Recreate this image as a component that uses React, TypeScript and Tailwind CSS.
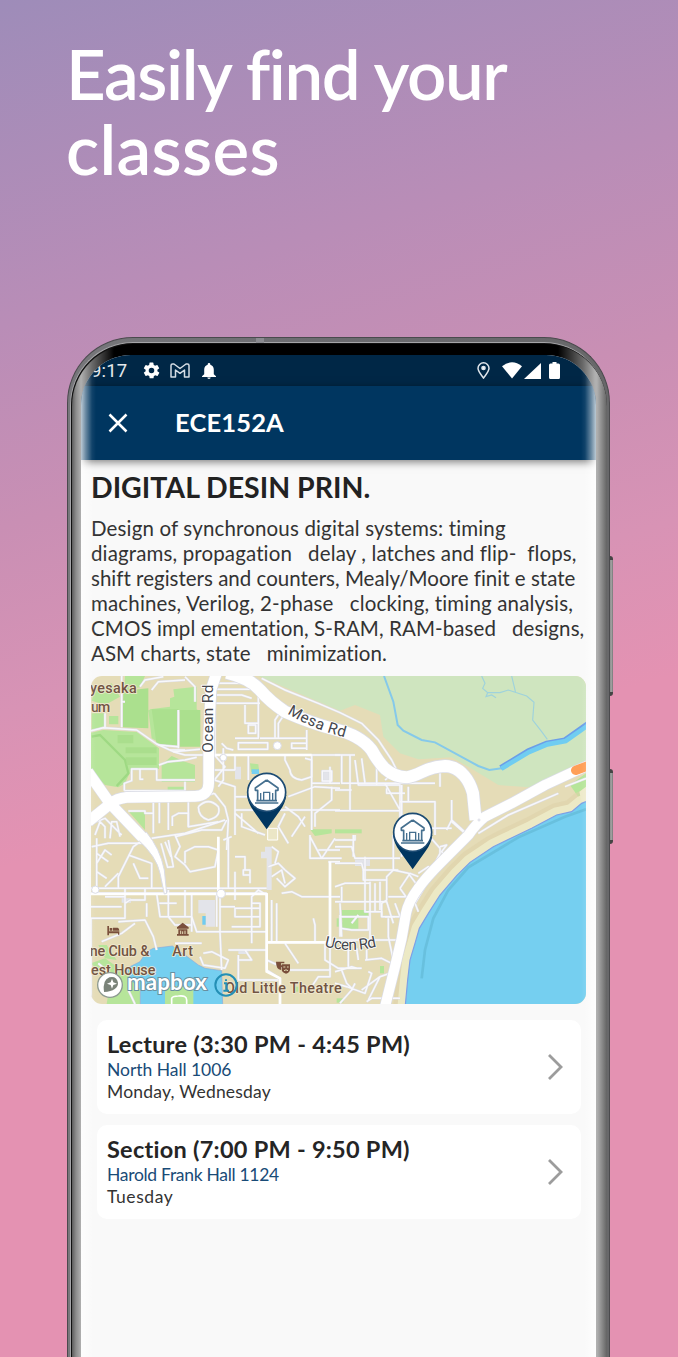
const minorRoads = [
  "M110 18V172", "M18 182L55 173L155 180L215 222L265 245L345 238", "M165 50L180 30L235 20M300 20L330 50V95", "M60 130V172",
  "M265 245L300 255H765", "M222 285L250 275L300 270L335 262", "M118 362V340L140 332V297H215V330H330", "M118 362H300V335", "M165 297V328H175",
  "M205 395V490M223 395V460M250 395V480M205 430H180V423H130M262 468V440L280 430H310V470", "M310 395V470L400 455", "M20 460L60 445L110 495M30 495L45 455L60 470V505M75 505L80 455L95 455L105 500",
  "M390 18V255M390 40H520M390 58H500M395 75H470L500 85M390 100H525M500 18L520 40", "M480 105V160H520V105M520 75V205H450M490 165H512V190H490Z M460 218H548V238H460Z",
  "M570 205V150L590 120M580 205V160L600 130M525 205H665M665 180V240M620 220H665V235H620Z", "M388 255L420 290L388 330M415 235V330L400 350M410 220L425 235L445 240M388 330L450 350V495M388 300H450V255",
  "M490 255V330M450 420H765M520 330L500 380H450M600 255V270L615 300Q615 325 650 330L680 320L680 270L660 265", "M680 255V480M680 340H765M735 290V340M712 303H740V333H712Z",
  "M610 380L690 350L765 355M600 410L640 440L660 470M690 470L690 430L740 390V350", "M450 430L520 490M470 430V470L540 495M600 430L580 470L610 520M620 500L660 440",
  "M388 370L420 410L430 450L425 540M340 385L388 370M340 410Q370 380 400 410Q410 440 370 450Q340 440 340 410", "M200 505L300 490L420 450M425 450L410 480H350L270 500",
  "M270 495L285 530L270 560L300 585L315 605L390 590L400 540L370 530L330 530L300 545V580", "M400 505V660M415 510L440 500M430 505V655M450 560H480V600H495V640M475 600H495V615H475Z",
  "M18 655H545M18 670H545M405 672V785H545M395 672V770M545 670V900L585 925V1002", "M545 675L520 660L500 680V820M450 605V690M450 715H525V740H450ZM500 700H525V770H440M405 710H450",
  "M100 655V620L130 560L145 530L180 505M130 555L200 580V655M145 580L165 625H190M60 650L100 610", "M35 505V650M35 550L70 575M35 605L65 625M35 580L60 540L80 555M20 530L70 520H180",
  "M18 745H120V655M18 710H110M60 680H120V700L135 690H180V655M215 670L225 740H320M223 700H275M250 660V740L270 765H320M320 670V785",
  "M100 755L180 750L205 800L215 840M50 815L110 790L150 760M185 700V740M320 740L335 785H405M300 740V660",
  "M18 745V1002M40 880L80 915M130 960L150 1002M405 785L410 900", "M270 820H350M355 850L380 845L430 870L420 895L355 885L345 860", "M460 855V930H580M460 870H500L480 840M430 840H545",
  "M545 817H735V900M735 575V820M730 575H765M560 690V817M575 700V817M590 670L620 665L650 680H765M685 745L690 765V815", "M600 820L640 880M545 870L610 900H735",
  "M600 600L630 625L600 650L575 625M560 620L590 600L600 640", "M675 495V565H770M675 500L710 565L750 505M700 540H765", "M720 820V870L760 895H830M735 895V920H700L680 950L735 960",
  "M750 255H810M770 255V340H1050M795 255V420M810 270L820 345H945V495M750 422H945M900 340L945 420M830 265L840 340M750 360H800",
  "M875 290V345M950 345V560M970 350V395H1050V495M945 475H1100M945 395H1050M905 355V370H960M940 300L900 330", "M1100 390V450L1150 495M1100 450L1085 480M1100 455L1140 490M1065 310V350",
  "M1420 370L1270 435L1180 490M1503 325L1440 350", "M750 510H810V495M805 495V560M750 530L800 530L810 565H945M750 580H830L835 600H940M840 560V725H890V740H930",
  "M925 495V600L970 610L1000 650M925 600L905 620V690L890 700V740M945 655L975 610L1000 620M945 655L970 690", "M850 630H905M855 635V830M870 640V725M885 635V720M835 600V630H850M750 650L780 640H855M770 650V695M750 695H905L925 760",
  "M910 680H960M900 740H945L930 700M765 700L770 800M910 745V800L925 870M750 810H940M765 735V800", "M765 740H850V780H800L765 775M820 735L800 760", "M750 905L800 890L815 895M770 900L785 940L805 960M750 940L785 950L840 970L860 910L850 905M830 960L885 920L915 910M885 920L850 990M840 870L890 865L920 880M790 840V890M815 835L820 870M845 840V870",
  "M1030 495L1065 535V550L1050 580M1065 530L1085 525L1070 545L1080 560L1060 570", "M1000 610L1030 590L1050 600L1020 650L990 700L1000 725", "M765 1000L800 960L810 940M845 995L860 985H945", "M550 590L580 580L600 600M560 530L580 545L570 580",
  "M530 25L600 60L700 100L765 128L830 160L880 210L920 270L935 300", "M200 60L220 35L300 30M110 95H120M255 240H300M280 235V120M220 225L280 230",
  "M250 510L265 590L248 592L228 520M240 515L258 560",
];

const greens = [
  "M120 18H180L165 52L118 62Z", "M30 60L80 40L105 80L60 105L20 92Z", "M20 130H60V168L20 182Z", "M72 138H100V163H72Z", "M265 58L335 50V118L345 125H190L195 118L255 110V85L268 80Z",
  "M18 188L55 180L155 186L222 235V297H140L120 340L100 352L60 345L18 305Z", "M190 120H240V228L200 205Z", "M230 285L260 258L300 275L330 285V335H230Z", "M248 350H300V362H248Z", "M130 423H180V480Z",
  "M495 280L520 283L523 310L498 305Z", "M675 478H740V490L690 498Z", "M750 478H830V490H750Z", "M1455 345L1503 310V395H1490Z", "M770 720H850V738H820V780H765L772 755Z", "M885 888H897V910H885Z", "M755 985H775V998H755Z",
  "M40 825L65 825L95 870L60 865Z", "M18 880L60 865L130 915L165 960V1002H65L75 940Z", "M1020 440L1035 455H1020Z", "M630 950H640V965H630Z", "M755 745V770H765V745Z",
];

function Pin({ x, y }: { x: number; y: number }) {
  return (
    <g transform={`translate(${x} ${y})`}>
      <path d="M-59 8Q-56 34 -39 56L0 111L39 56Q56 34 59 8Z" fill="#003660" />
      <circle r="57" fill="#fff" stroke="#1c4b73" strokeWidth="5" />
      <path d="M0 -37L-34 -13V-6H-27V24M0 -37L34 -13V-6H27V24" fill="none" stroke="#46708f" strokeWidth="5" strokeLinejoin="round" />
      <path d="M-9 24V0H9V24M-18 2V24M18 2V24" fill="none" stroke="#46708f" strokeWidth="4" />
      <path d="M-31 25H31M-35 32H35" stroke="#46708f" strokeWidth="5" />
    </g>
  );
}

function CampusMap() {
  const coast = "M1503 395L1490 400L1460 425L1415 435L1340 475L1262 512L1225 530L1155 577L1115 617L1065 675L1030 730L1003 775L990 820L975 870L968 930L961 1005";
  const mesa = "M425 8Q495 25 525 60T600 125Q680 160 750 178Q825 195 860 240C885 285 910 320 965 322C1010 315 1020 290 1080 288C1130 290 1155 335 1164 370L1172 450";
  const shore = "M1510 286L1460 308L1380 345L1280 400L1200 440Q1175 460 1150 495L1070 575Q1020 625 1000 655Q970 695 963 730L950 805L930 890L900 1010";
  const ocean = "M395 8L378 60L371 200V340Q371 378 330 379L125 382Q95 385 75 402L10 455";
  const diag = "M8 305L75 400L172 502";
  const taper = "M158 508Q215 560 225 610L238 672L245 670L238 600Q225 535 184 486Z";
  const text = { fontFamily: "Roboto, sans-serif", paintOrder: "stroke", stroke: "#f1ead2", strokeWidth: 5, strokeLinejoin: "round" } as const;
  return (
    <svg viewBox="18 18 1485 984" className="block h-[328px] w-[495px] rounded-[11px]" preserveAspectRatio="none">
      <rect x="0" y="0" width="1520" height="1020" fill="#e5dcb7" />
      <path d="M520 18L765 122L810 105L885 135L895 200L945 250L1000 268L1100 262L1150 290L1240 345L1330 352L1400 330L1503 275V18Z" fill="#cfe5bf" />
      {greens.map((d) => <path key={d} d={d} fill="#b6e59a" />)}
      <path d="M115 62L190 55V175L113 172ZM200 118H280V228L215 226ZM284 120H346V230H284Z" fill="#abe08e" />
      <path d="M20 200L45 195L120 270L130 310L95 348" fill="none" stroke="#9ed983" strokeWidth="7" />
      <path d="M98 195H145V220H98ZM122 232H215V250H122ZM122 262H215V285H122Z" fill="#a5dc88" opacity=".7" />
      <path d="M500 298H522V312H500Z" fill="#75cff0" />
      <path d="M450 290H468V328H450ZM340 690H390V770H362V730H340ZM540 530H560V660H545V565H528V545H540ZM712 303H740V333H712ZM460 838H490V852H460ZM110 685H138V698H110ZM810 568H855V588H810Z" fill="#e3e4ea" />
      <path d="M352 738H362V764H352Z" fill="#6fcbf0" />
      <path d="M125 895L165 875L185 845L205 835L262 828L300 855L340 885L360 895L410 902L413 1005H166V960L135 925Z" fill="#75cff0" stroke="#8dabdd" strokeWidth="2" />
      <path d="M240 1005V965Q245 948 280 948Q325 945 325 960V1005Z" fill="#b6e59a" />
      <path d="M260 1005V985Q262 978 280 978Q305 975 305 990V1005" fill="none" stroke="#fff" strokeWidth="5" />
      <path d="M897 18L925 95L938 165L955 182L1010 210L1050 217L1180 288L1213 300L1250 295" fill="none" stroke="#85c9ea" strokeWidth="6" />
      <path d="M1190 18L1200 40L1193 55L1208 68L1245 68L1270 60L1325 78L1347 97L1343 150L1370 185L1387 208M1280 18L1292 68M1208 68L1203 80L1220 75L1233 83" fill="none" stroke="#9fd2dc" strokeWidth="3.5" />
      <path d="M1247 293L1330 243L1385 220L1440 210L1510 160" fill="none" stroke="#6b9ee8" strokeWidth="16" />
      <path d="M1249 296L1332 246L1387 223L1442 213L1512 164" fill="none" stroke="#70cdf1" strokeWidth="14" />
      <path d={coast} fill="none" stroke="#ddd2aa" strokeWidth="72" opacity=".6" strokeLinejoin="round" />
      <path d={coast} fill="none" stroke="#ece9c5" strokeWidth="46" strokeLinejoin="round" />
      <path d="M1503 350L1483 365L1490 395H1503Z" fill="#eeeacb" />
      <path d={coast + "H1520V395Z"} fill="#75cff0" />
      <path d={coast} fill="none" stroke="#7c9fe6" strokeWidth="3.5" />
      <path d="M1503 418L1440 440L1300 502L1150 592L1090 660L1045 745L1020 840L1010 925" fill="none" stroke="#5fb6d2" strokeWidth="8" opacity=".6" />
      <g fill="none" strokeLinejoin="round">
        {minorRoads.map((d) => <path key={d} d={d} stroke="#dcdde4" strokeWidth="7.5" />)}
        {minorRoads.map((d) => <path key={d} d={d} stroke="#f8f8fb" strokeWidth="4.5" />)}
        <path d="M18 672H545V905L585 925V1002M400 672V500M545 817H735V575M370 255H680" stroke="#fff" strokeWidth="8" />
        <path d={ocean} stroke="#dadce6" strokeWidth="36" />
        <path d={diag} stroke="#dadce6" strokeWidth="36" />
        <path d={taper} fill="#fff" stroke="#dadce6" strokeWidth="3" />
        <path d={mesa} stroke="#dadce6" strokeWidth="40" />
        <path d={shore} stroke="#dadce6" strokeWidth="34" />
        <path d={ocean} stroke="#fff" strokeWidth="32" />
        <path d={diag} stroke="#fff" strokeWidth="32" />
        <path d={mesa} stroke="#fff" strokeWidth="36" />
        <path d={shore} stroke="#fff" strokeWidth="30" />
        <path d="M1472 301L1520 283" stroke="#ff9f57" strokeWidth="28" strokeLinecap="round" />
      </g>
      <g fill="#fff" stroke="#dadce6" strokeWidth="3">
        <circle cx="408" cy="671" r="13" /><circle cx="31" cy="659" r="11" /><circle cx="415" cy="263" r="10" /><circle cx="577" cy="227" r="12" />
        <circle cx="1182" cy="450" r="3" />
      </g>
      <path d="M548 475H578V510H548Z" fill="#ebe6c6" stroke="#fff" strokeWidth="3" />
      <path id="mesa-label" d="M606 130Q690 182 800 207" fill="none" />
      <path id="ucen-label" d="M718 829Q800 852 890 826" fill="none" />
      <g fill="#46474d" fontSize="46" {...text} stroke="#fff">
        <text transform="translate(384 248) rotate(-90)" textLength="204">Ocean Rd</text>
        <text><textPath href="#mesa-label" textLength="188">Mesa Rd</textPath></text>
        <text><textPath href="#ucen-label" textLength="159">Ucen Rd</textPath></text>
      </g>
      <g fill="#715443" fontSize="43" fontWeight="500" {...text}>
        <text x="15" y="68" textLength="140">yesaka</text>
        <text x="18" y="125" textLength="58">um</text>
        <text x="14" y="858" textLength="179">ne Club &amp;</text>
        <text x="18" y="915" textLength="193">est House</text>
        <text x="262" y="858" textLength="62">Art</text>
        <text x="420" y="970" textLength="350">Old Little Theatre</text>
      </g>
      <g fill="#7a4f3b">
        <path d="M67 768H72V784H103V794H99V790H72V796H67ZM74 774H82V782H74ZM84 773H98Q103 774 103 782H84Z" />
        <path d="M276 772L293 758L311 772V776H276ZM280 778H307V792H311V797H276V792H280Z" />
        <path d="M287 782V792M293 792V784M300 782V792" stroke="#e5dcb7" strokeWidth="3" />
        <path d="M573 875H598V880H588V886H596V892H588V900Q573 898 573 875ZM590 883H615V900Q612 910 603 911Q592 908 590 900Z" />
        <path d="M595 891H601M606 891H611M597 902Q603 897 609 902" stroke="#e5dcb7" strokeWidth="3" fill="none" />
      </g>
      <circle cx="75" cy="945" r="37" fill="#fff" stroke="#8d9a91" strokeWidth="4" />
      <path d="M57 966Q52 930 73 922Q95 917 99 938Q100 962 57 966Z" fill="#7a8379" />
      <path d="M81 926L85 937L96 941L85 945L81 956L77 945L66 941L77 937Z" fill="#fff" />
      <text x="126" y="960" textLength="240" fontSize="67" fontWeight="700" fontFamily="Lato, sans-serif" fill="#fff" stroke="#698f9f" strokeWidth="6" style={{ paintOrder: "stroke" }}>mapbox</text>
      <circle cx="423" cy="945" r="32" fill="none" stroke="#248fb5" strokeWidth="6" />
      <path d="M417 940H424V962M415 962H432M423 928V933" fill="none" stroke="#248fb5" strokeWidth="6" />
      <Pin x={545} y={367} />
      <Pin x={983} y={487} />
    </svg>
  );
}

function StatusBar() {
  return (
    <div className="flex h-[31px] items-center bg-[#002746] pl-[10px] text-white">
      <span className="w-[51px] pt-[2px] font-[Roboto] text-[18.5px] leading-none tracking-[0.2px] text-white/90">9:17</span>
      <svg className="h-[19px] w-[19px]" viewBox="0 0 24 24" fill="currentColor"><path d="M19.4 13a7.6 7.6 0 0 0 0-2l2.1-1.600a.5.5 0 0 0 .1-.6l-2-3.500a.5.5 0 0 0-.6-.2l-2.500 1a7.300 7.300 0 0 0-1.700-1l-.4-2.600a.5.5 0 0 0-.5-.5h-4a.5.5 0 0 0-.5.4L9.100 5a7.600 7.600 0 0 0-1.700 1L5 5.100a.5.5 0 0 0-.6.2l-2 3.500a.5.5 0 0 0 .1.600L4.600 11a7.600 7.600 0 0 0 0 2l-2.100 1.600a.5.5 0 0 0-.1.600l2 3.500c.1.2.4.3.6.2l2.500-1c.5.4 1.100.7 1.700 1l.4 2.600c0 .2.200.4.500.4h4c.2 0 .5-.2.500-.4l.4-2.600a7.300 7.300 0 0 0 1.700-1l2.500 1c.2.100.5 0 .6-.2l2-3.500a.5.5 0 0 0-.1-.6zM12 15.500a3.500 3.500 0 1 1 0-7 3.500 3.500 0 0 1 0 7" /></svg>
      <svg className="ml-[9px] h-[15px] w-[20px]" viewBox="0 0 20 15" fill="none" stroke="#d5dde5" strokeWidth="1.500" strokeLinejoin="round"><path d="M1 2.500Q1 1 2.500 1H4L10 5.500L16 1H17.500Q19 1 19 2.500V14H14.500V7L10 10.300L5.500 7V14H1Z" /></svg>
      <svg className="ml-[12px] h-[16px] w-[14px]" viewBox="0 0 14 16" fill="currentColor"><path d="M7 0a1.300 1.300 0 0 1 1.300 1.300v.5C10.600 2.400 11.800 4.400 11.800 6.800V11.300L14 13.200V14H0V13.200L2.200 11.300V6.800C2.200 4.400 3.400 2.400 5.700 1.800V1.300A1.300 1.300 0 0 1 7 0ZM5.300 14.500H8.700A1.700 1.500 0 0 1 5.300 14.500Z" /></svg>
      <svg className="ml-[261px] h-[17px] w-[13px]" viewBox="0 0 13 17" fill="none" stroke="#dfe5eb" strokeWidth="1.500"><path d="M6.500 16C3.500 12 1 9.300 1 6.300A5.500 5.500 0 0 1 12 6.300C12 9.300 9.500 12 6.500 16Z" /><circle cx="6.500" cy="6" r="1.600" fill="#fff" /></svg>
      <svg className="ml-[12px] h-[17px] w-[20px]" viewBox="0 0 20 17" fill="currentColor"><path d="M0 4.300Q10 -3.800 20 4.300L10 16.500Z" /></svg>
      <svg className="ml-[2px] h-[16px] w-[17px]" viewBox="0 0 17 16" fill="currentColor"><path d="M17 0V16H0Z" /></svg>
      <svg className="ml-[8px] h-[17px] w-[11px]" viewBox="0 0 11 17" fill="currentColor"><path d="M3.500 0H7.500V1.500H9.500Q11 1.500 11 3V15.500Q11 17 9.500 17H1.500Q0 17 0 15.500V3Q0 1.500 1.500 1.500H3.500Z" /></svg>
    </div>
  );
}

interface ClassCardProps {
  title: string;
  place: string;
  placeClass: string;
  days: string;
  daysClass: string;
}

function ClassCard({ title, place, placeClass, days, daysClass }: ClassCardProps) {
  return (
    <div className="flex h-[94px] items-start justify-between rounded-[10px] bg-white pt-[11px] pr-[18px] pl-[10px]">
      <div className="flex flex-col items-start whitespace-pre">
        <span className="h-[27px] text-[23.5px] leading-[26px] font-bold tracking-[0.26px] text-[#252525]">{title}</span>
        <span className={"h-[22px] text-[17.5px] leading-[23px] text-[#194b77] " + placeClass}>{place}</span>
        <span className={"h-[22px] text-[17.5px] leading-[23px] text-[#333] " + daysClass}>{days}</span>
      </div>
      <svg className="mt-[23px] h-[26px] w-[16px]" viewBox="0 0 16 26" fill="none" stroke="#9c9c9c" strokeWidth="2.800"><path d="M2 1L14 13L2 25" /></svg>
    </div>
  );
}

const description = [
  { text: "Design of synchronous digital systems: timing", tracking: "tracking-[0.15px]" },
  { text: "diagrams, propagation   delay , latches and flip-  flops,", tracking: "tracking-[0.13px]" },
  { text: "shift registers and counters, Mealy/Moore finit e state", tracking: "tracking-[0.01px]" },
  { text: "machines, Verilog, 2-phase   clocking, timing analysis,", tracking: "tracking-[0.16px]" },
  { text: "CMOS impl ementation, S-RAM, RAM-based   designs,", tracking: "tracking-[0.08px]" },
  { text: "ASM charts, state   minimization.", tracking: "tracking-[0.06px]" },
];

export default function App() {
  return (
    <main className="h-[1357px] w-[678px] overflow-hidden bg-[linear-gradient(164deg,#9e8cb9_0%,#b98db7_21%,#c98fb4_34%,#d893b5_46%,#e492b2_56%,#e492b2_100%)] font-[Lato,sans-serif]">
      <h1 className="flex h-[337px] flex-col items-start pt-[36px] pl-[66px] text-[69px] leading-[75px] font-semibold whitespace-pre text-white">
        <span className="tracking-[-1.4px]">Easily find your</span>
        <span className="tracking-[0.35px]">classes</span>
      </h1>
      <div className="relative ml-[67px] w-[543px]">
        <div className="absolute top-[219px] left-[542px] h-[140px] w-[4px] rounded-r-[3px] border-y-4 border-[#444] bg-[linear-gradient(90deg,#555,#aaa,#777)]" />
        <div className="absolute top-[432px] left-[542px] h-[75px] w-[4px] rounded-r-[3px] border-y-4 border-[#444] bg-[linear-gradient(90deg,#555,#aaa,#777)]" />
        <div className="relative h-[1100px] rounded-t-[66px] border border-b-0 border-[#4a4a4d] bg-[linear-gradient(90deg,#77777b,#6b6b6f_50%,#68686a)] px-[2px] pt-[4px]">
          <div className="absolute top-0 left-[188px] h-[5px] w-[8px] bg-[#8b8b90]" />
          <div className="h-full rounded-t-[63px] border-t border-l border-[#a5a5a8] bg-[#111] pt-px pl-px">
            <div className="h-full rounded-t-[62px] bg-[linear-gradient(90deg,#0000_9px,#0006_20px,#000_42px,#000_486px,#0006_511px,#0000_523px),linear-gradient(90deg,#5c5c5c_0px,#8c8c8c_4px,#b0b0b0_9px,#b0b0b0_525px,#8a8a8a_530px,#636363_535px,#707070_538px)] bg-[length:100%_90px,100%_100%] bg-no-repeat pt-[11px] pr-[11px] pl-[9px]">
              <div className="relative h-full overflow-hidden rounded-t-[50px] bg-[#f9f9f9]">
                <StatusBar />
                <header className="relative z-10 flex h-[74px] items-center bg-[#003660] pl-[27px] text-white shadow-[0_2px_8px_rgba(0,0,0,.5)]">
                  <svg className="h-[20px] w-[20px]" viewBox="0 0 20 20" stroke="currentColor" strokeWidth="2.500"><path d="M1.500 1.500L18.500 18.500M18.500 1.500L1.500 18.500" /></svg>
                  <span className="ml-[47px] text-[25.5px] leading-none font-bold tracking-[0.15px] whitespace-pre">ECE152A</span>
                </header>
                <section className="px-[10px] pt-[10px]">
                  <h2 className="h-[34px] text-[28.5px] leading-[34px] font-bold whitespace-pre text-[#222]">DIGITAL DESIN PRIN.</h2>
                  <div className="flex h-[162px] flex-col items-start pt-[12px] text-[20.5px] leading-[25px] whitespace-pre text-[#333] [font-variant-ligatures:none]">
                    {description.map((line) => <span key={line.text} className={"h-[25px] " + line.tracking}>{line.text}</span>)}
                  </div>
                  <div className="mt-[10px]"><CampusMap /></div>
                </section>
                <section className="flex flex-col gap-[11px] pt-[16px] pr-[15px] pl-[16px]">
                  <ClassCard title="Lecture (3:30 PM - 4:45 PM)" place="North Hall 1006" placeClass="tracking-[-0.04px]" days="Monday, Wednesday" daysClass="tracking-[0.2px]" />
                  <ClassCard title="Section (7:00 PM - 9:50 PM)" place="Harold Frank Hall 1124" placeClass="tracking-[-0.3px]" days="Tuesday" daysClass="tracking-[0.55px]" />
                </section>
                <div className="pointer-events-none absolute inset-0 z-20 bg-[linear-gradient(90deg,#fffb_0px,#fff6_5px,#fff1_11px,#fff0_15px,#fff0_500px,#fff1_504px,#fff6_510px,#fffb_515px)]" />
              </div>
            </div>
          </div>
        </div>
      </div>
    </main>
  );
}
